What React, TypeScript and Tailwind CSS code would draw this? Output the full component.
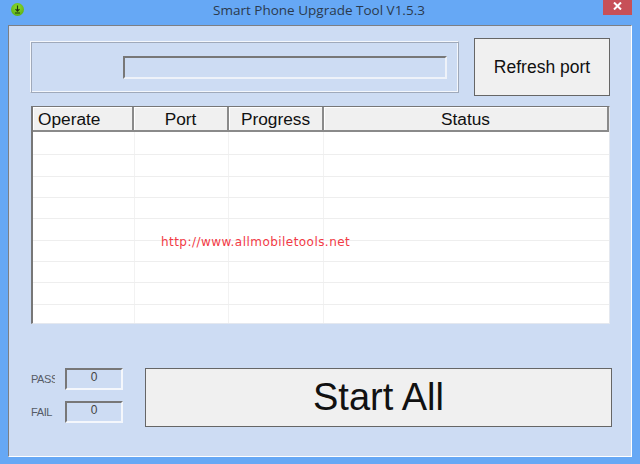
const columns = [
  { label: "Operate", width: "w-[101px]", align: "pl-[5px] text-left" },
  { label: "Port", width: "w-[95px]", align: "text-center" },
  { label: "Progress", width: "w-[95px]", align: "text-center" },
  { label: "Status", width: "w-[285px]", align: "text-center" },
];

const rowHeights = ["h-[23px]", "h-[22px]", "h-[21px]", "h-[21px]", "h-[22px]", "h-[21px]", "h-[21px]", "h-[22px]", "h-[18px] border-b-0"];

const Counter = ({ label, value }: { label: string; value: string }) => (
  <div className="flex h-[22px] items-center">
    <span className="mt-[1px] w-[24px] overflow-hidden text-[11px] tracking-[-0.4px] whitespace-nowrap text-[#555b66]">{label}</span>
    <div className="ml-[10px] h-[22px] w-[58px] border-2 border-t-[#777777] border-l-[#777777] border-r-[#f4f7fc] border-b-[#f4f7fc] text-center text-[12px] leading-[14px] text-[#444444]">
      {value}
    </div>
  </div>
);

export default function App() {
  return (
    <div className="flex h-[464px] w-[640px] flex-col overflow-hidden bg-[#66a8f5] font-['Liberation_Sans',sans-serif]">
      {/* Title bar */}
      <div className="relative flex h-[25px] shrink-0 items-center justify-center">
        <div className="absolute top-[3px] left-[11px] flex h-[13px] w-[13px] items-center justify-center rounded-full bg-[radial-gradient(circle_at_50%_35%,#8fdc2e,#4da60f)]">
          <svg width="9" height="9" viewBox="0 0 9 9" fill="none" stroke="#1c3a10" strokeWidth="1.2">
            <path d="M4.5 0.5V6M2.5 4.2L4.5 6.2L6.5 4.2M2 8H7" />
          </svg>
        </div>
        <span className="mt-[-4px] ml-[-2px] text-[13.5px] text-[#2b3a4d] font-['Open_Sans',sans-serif]">Smart Phone Upgrade Tool V1.5.3</span>
        <div className="absolute top-0 right-[8px] flex h-[15px] w-[29px] items-center justify-center bg-[#c75058] pb-[3px]">
          <svg width="9" height="8" viewBox="0 0 9 8" stroke="#ffffff" strokeWidth="2">
            <path d="M1 0.5L8 7.5M8 0.5L1 7.5" />
          </svg>
        </div>
      </div>

      {/* Client area */}
      <div className="mr-[8px] mb-[7px] ml-[8px] flex flex-1 flex-col border border-t-[#7c7f85] border-l-[#7c7f85] border-r-white border-b-white bg-[#cddcf3] pr-[20px] pl-[21px]">
        <div className="mt-[12px] flex items-center">
          <div className="flex h-[52px] w-[429px] items-center justify-end border border-t-[#f4f7fc] border-l-[#f4f7fc] border-r-[#9fa9ba] border-b-[#9fa9ba] pr-[11px] shadow-[inset_1px_1px_0_#9fa9ba,inset_-1px_-1px_0_#f4f7fc]">
            <div className="h-[23px] w-[324px] border-2 border-t-[#777777] border-l-[#777777] border-r-[#eef2f9] border-b-[#eef2f9]" />
          </div>
          <button className="ml-[15px] h-[58px] w-[136px] border border-[#666666] bg-[#f0f0f0] text-[17.5px] text-[#111111]">
            Refresh port
          </button>
        </div>

        {/* Port list */}
        <div className="relative mt-[10px] ml-[1px] h-[218px] w-[579px] border border-l-2 border-t-[#777777] border-l-[#777777] border-r-[#e4e8ef] border-b-[#e4e8ef] bg-white">
          <div className="flex h-[25px] bg-[#f0f0f0]">
            {columns.map((col) => (
              <div
                key={col.label}
                className={`${col.width} ${col.align} border-r-2 border-b-2 border-r-[#8a8a8a] border-b-[#8a8a8a] text-[17.3px] leading-[25px] text-[#111111] shadow-[inset_1px_1px_0_#ffffff]`}
              >
                {col.label}
              </div>
            ))}
          </div>
          {rowHeights.map((height, i) => (
            <div key={i} className={`flex ${height} border-b border-[#eeeeee]`}>
              <div className="w-[102px] border-r border-[#f2f2f2]" />
              <div className="w-[94px] border-r border-[#f2f2f2]" />
              <div className="w-[95px] border-r border-[#f2f2f2]" />
              <div className="flex-1" />
            </div>
          ))}
          <span className="absolute top-[126px] left-[128px] text-[12px] tracking-[0.45px] whitespace-nowrap text-[#f23a46] font-['DejaVu_Sans',sans-serif]">
            http://www.allmobiletools.net
          </span>
        </div>

        {/* Footer */}
        <div className="mt-[44px] flex items-start">
          <div className="ml-[1px] flex w-[115px] shrink-0 flex-col gap-[11px]">
            <Counter label="PASS" value="0" />
            <Counter label="FAIL" value="0" />
          </div>
          <button className="ml-[-1px] h-[59px] w-[467px] shrink-0 border border-[#666666] bg-[#f0f0f0] pb-[2px] text-[38px] text-[#111111]">
            Start All
          </button>
        </div>
      </div>
    </div>
  );
}
